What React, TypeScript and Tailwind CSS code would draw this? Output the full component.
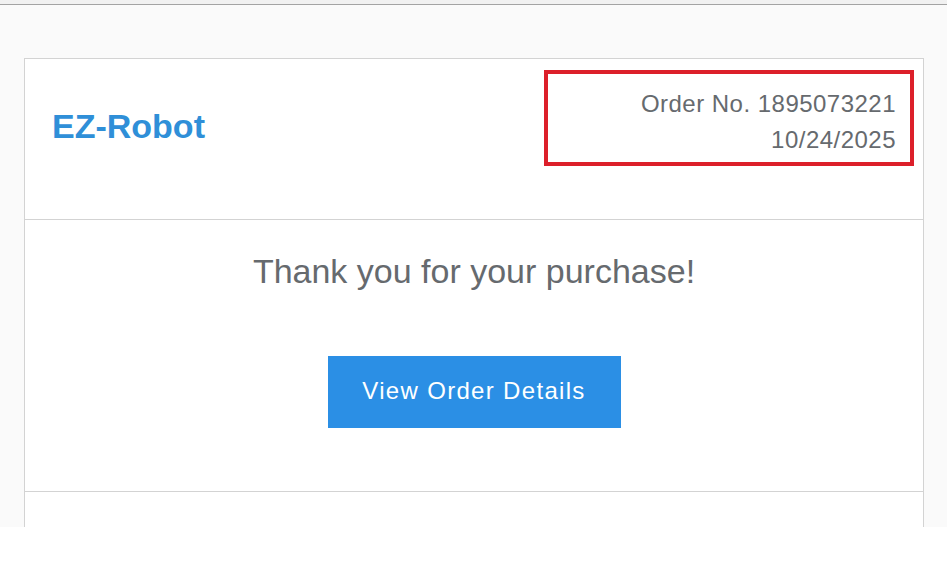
export default function App() {
  return (
    <div className="h-[527px] overflow-hidden bg-[#fafafa] font-['Liberation_Sans',Arial,sans-serif]">
      {/* browser chrome edge */}
      <div className="h-[4px] bg-[#f1f1f1]" />
      <div className="h-[1px] bg-[#a3a3a3]" />

      <div className="mx-[24px] mt-[53px] w-[900px] border border-[#d3d3d3] bg-white">
        {/* Header */}
        <header className="flex h-[161px] items-start justify-between border-b border-[#d3d3d3] pl-[27px] pr-[9px] pt-[11px]">
          <h1 className="mt-[39px] text-[34px] font-bold leading-none text-[#2f8fd8]">
            EZ-Robot
          </h1>
          <div className="w-[370px] border-4 border-[#dc1f2a] pb-[4px] pr-[14px] pt-[12px] text-right text-[24px] leading-[36px] tracking-[0.02em] text-[#666a6e]">
            <p>Order No. 1895073221</p>
            <p>10/24/2025</p>
          </div>
        </header>

        {/* Thank you */}
        <section className="flex flex-col items-center border-b border-[#d3d3d3] pb-[63px] pt-[34px]">
          <h2 className="text-[34px] leading-none text-[#666a6e]">
            Thank you for your purchase!
          </h2>
          <a
            href="#"
            className="mt-[68px] flex h-[72px] w-[293px] items-center justify-center bg-[#2b8fe5] pb-[2px] text-[24px] tracking-[0.055em] text-white"
          >
            View Order Details
          </a>
        </section>

        <section className="h-[120px]" />
      </div>
    </div>
  );
}
